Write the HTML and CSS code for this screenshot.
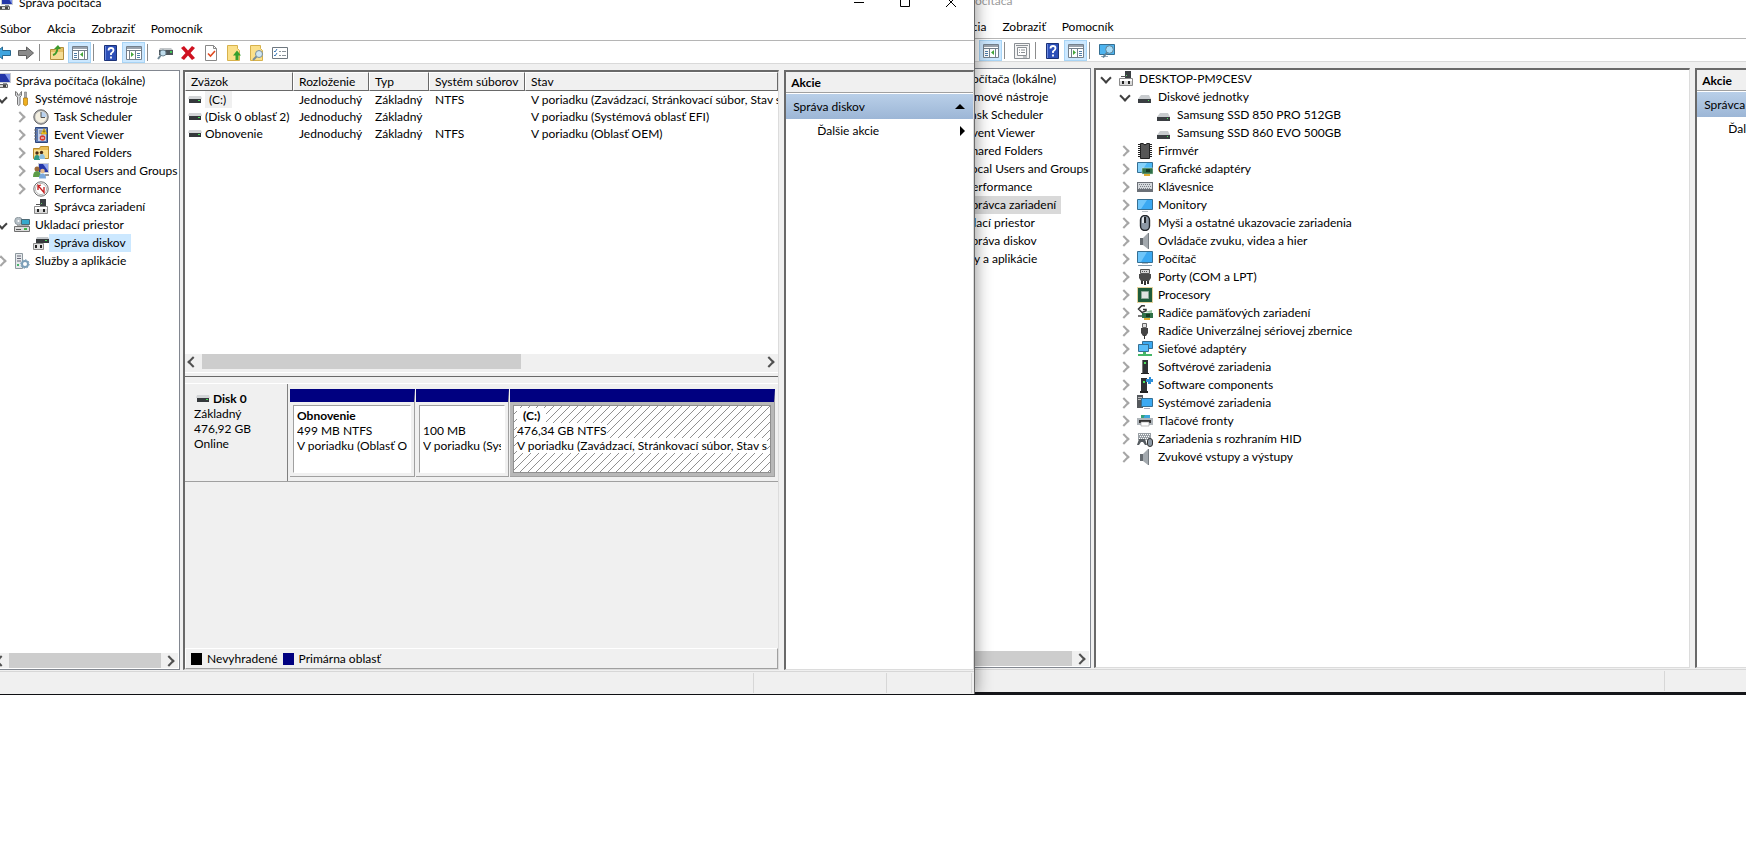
FILE: index.html
```html
<!DOCTYPE html>
<html lang="sk">
<head>
	<meta charset="UTF-8">
	<title>Správa počítača</title>
	<link rel="stylesheet" href="styles.css">
</head>
<body>
	<!-- icons -->
	<svg class="sprite" aria-hidden="true">
		<symbol id="i-computer" viewBox="0 0 16 16">
			<path fill="#c9ccd3" d="M4 0h12v10H4z"/><path fill="#2436a8" d="M5 1h10v8H5z"/><path fill="#7f95e8" d="M10 1h5v8z"/>
			<path fill="#8a8f99" d="M8 10h4v2H8z"/><path fill="#d5d5d5" stroke="#666" d="M.5 11.500h12v3H.5z"/><path fill="#444" d="M2 12h3v2H2zM8 12h3v2H8z"/>
		</symbol>
		<symbol id="i-tools" viewBox="0 0 16 16">
			<path fill="#d8dadd" stroke="#777" d="M1.500.5v4l2 1.500v7.500q1 2 2.500 0V6l1.500-1.500v-4L6 2.500v1.500H3.500V2z"/>
			<path fill="#aaa" stroke="#777" stroke-width=".6" d="M10.500 1h2v6h-2z"/><path fill="#f0b020" stroke="#a87510" stroke-width=".7" d="M9.500 7h4v6.500q-2 2.500-4 0z"/>
		</symbol>
		<symbol id="i-clock" viewBox="0 0 16 16">
			<circle cx="8" cy="8" r="7.200" fill="#b4b4b4" stroke="#666"/><circle cx="8" cy="8" r="5.700" fill="#f3efe0"/>
			<path fill="#b9d2ef" d="M8 8V2.500A5.500 5.500 0 0 1 13.500 8z"/><path fill="none" stroke="#555" d="M8 3v5.500h4"/>
		</symbol>
		<symbol id="i-event" viewBox="0 0 16 16">
			<path fill="#5b79b3" stroke="#2d467c" d="M2.500.5h12v15h-12z"/><path fill="#c3d0e8" d="M5 2h8v12H5z"/><path stroke="#777" d="M1 3h3M1 6h3M1 9h3M1 12h3M6 4h3M6 6h2"/>
			<path fill="#ffd21f" stroke="#b18200" stroke-width=".6" d="M11 1.500l3 5.500H8z"/><path stroke="#222" d="M11 3.500v2"/><circle cx="9.500" cy="11" r="2.800" fill="#d93b30"/><path stroke="#fff" d="M8 11h3"/>
		</symbol>
		<symbol id="i-share" viewBox="0 0 16 16">
			<path fill="#e9bd55" stroke="#b98a2b" d="M.5 3.500h6l1-2h8v12H.5z"/><path fill="#f9de8d" d="M1 5h14v8H1z"/>
			<circle cx="4" cy="8" r="1.700" fill="#4a2c14"/><circle cx="8.500" cy="7.500" r="1.700" fill="#4a2c14"/><path fill="#2f9a86" d="M1 15q0-5 3-5t3 5z"/><path fill="#8dbfe0" d="M6 14q0-5 3-5t3 5z"/>
		</symbol>
		<symbol id="i-users" viewBox="0 0 16 16">
			<path fill="#c9ccd3" d="M5 0h11v10H5z"/><path fill="#2436a8" d="M6 1h9v8H6z"/><path fill="#8fa4ee" d="M10 1h5v7z"/>
			<circle cx="4" cy="6" r="2.500" fill="#9c6a3a"/><path fill="#5c9c48" d="M0 14q0-6 4-6t4 6z"/><circle cx="9.500" cy="8" r="2.300" fill="#e3b98b"/><path fill="#7aa8dc" d="M6 15.500q0-5 3.500-5t3.500 5z"/><path fill="#999" d="M12 11h4v2h-4z"/>
		</symbol>
		<symbol id="i-perf" viewBox="0 0 16 16">
			<circle cx="8" cy="8" r="7.200" fill="#fff" stroke="#6b6b6b"/><circle cx="8" cy="8" r="5.600" fill="none" stroke="#bbb"/>
			<path fill="none" stroke="#c41a1a" stroke-width="1.300" d="M5 9V4.500l6 7V6M5 5l3-1"/>
		</symbol>
		<symbol id="i-device" viewBox="0 0 16 16">
			<path fill="#3b3f42" d="M7 0h6v7H7z"/><path fill="#5fd06a" d="M8 4h1v1H8z"/><path fill="#555" d="M3 5h5v1H3z"/>
			<path fill="#d9d9d9" stroke="#8a8a8a" d="M1.500 7.500h13v7h-13z"/><path fill="#fff" d="M2 8h12v2H2z"/><path fill="#222" d="M4 10h2v3H4zM10 10h2v3h-2z"/>
		</symbol>
		<symbol id="i-storage" viewBox="0 0 16 16">
			<circle cx="4.500" cy="4" r="3.800" fill="#b5bfc6" stroke="#7b858c" stroke-width=".7"/><circle cx="4.500" cy="4" r="1" fill="#fff"/>
			<path fill="#36a9cc" stroke="#4c6975" d="M7.500 2.500h8v5h-8z"/><path fill="#dcdcdc" stroke="#707070" d="M.5 9.500h15v5H.5z"/><path fill="#555" d="M2 12h5v1H2z"/><path fill="#41b649" d="M10 11h3v2h-3z"/><path fill="#aaa" d="M3 8h12v1H3z"/>
		</symbol>
		<symbol id="i-diskmgmt" viewBox="0 0 16 16">
			<path fill="#c3c7ca" d="M4 2h11l1 2H3z"/><path fill="#34383b" d="M3 4h13v4H3z"/><path fill="#4cda5c" d="M12 5h2v1h-2z"/>
			<path fill="#e2e2e2" stroke="#8c8c8c" d="M.5 8.500h10v6H.5z"/><path fill="#222" d="M2 10h2v3H2zM7 10h2v3H7z"/>
		</symbol>
		<symbol id="i-services" viewBox="0 0 16 16">
			<path fill="#e5e9ec" stroke="#8e989f" d="M1.500.5h7v15h-7z"/><path stroke="#667" d="M3 3h4M3 5.500h4M3 8h4"/><path fill="#49b56b" d="M3 11h2v2H3z"/>
			<circle cx="11" cy="11" r="3" fill="none" stroke="#7c9fb8" stroke-width="2"/><circle cx="11" cy="11" r="4.300" fill="none" stroke="#7c9fb8" stroke-dasharray="1.500 1.800"/>
		</symbol>
		<symbol id="i-disk" viewBox="0 0 16 16">
			<path fill="#c9cccf" d="M4 6h8l2 4H1z"/><path fill="#3a3e42" d="M1 10h13v4H1z"/><path fill="#4ce35c" d="M11 11h1v1h-1z"/>
		</symbol>
		<symbol id="i-vol" viewBox="0 0 14 8">
			<path fill="#d3d5d7" d="M1 0h12l1 3H0z"/><path fill="#34383b" d="M1 3h12v4H1z"/><path fill="#4ce35c" d="M10 4h2v1h-2z"/>
		</symbol>
		<symbol id="i-chip" viewBox="0 0 16 16">
			<path stroke="#222" stroke-width="14" stroke-dasharray="1 1" d="M8 1v14"/><path fill="#565656" stroke="#222" d="M3.500.5h2.500l2 1.500 2-1.500h2.500v15h-9z"/>
		</symbol>
		<symbol id="i-display" viewBox="0 0 16 16">
			<path fill="#4db8f5" stroke="#356f93" d="M.5 1.500h15v10H.5z"/><path fill="#86d2fb" d="M1 2h9L4 11H1z"/><path fill="#2f7148" stroke="#d6e4d0" stroke-width=".5" d="M5 7h11v6H5z"/><path fill="#163b26" d="M9 8h4v3H9z"/><path fill="#dcae35" d="M7 13h6v2H7z"/>
		</symbol>
		<symbol id="i-keyboard" viewBox="0 0 16 16">
			<path fill="#6b7077" d="M0 3h16v10H0z"/><path fill="#d5d9dd" d="M1 4h14v6H1z"/><path stroke="#7a7f85" stroke-dasharray="1 1" d="M2 5.500h12M3 7.500h11M2 9.500h12"/>
		</symbol>
		<symbol id="i-monitor" viewBox="0 0 16 16">
			<path fill="#3ba9f2" stroke="#356f93" d="M.5 2.500h15v10H.5z"/><path fill="#6fc6fa" d="M1 3h9l-6 9H1z"/><path fill="#b9bfc4" d="M5 14h6v1H5z"/>
		</symbol>
		<symbol id="i-mouse" viewBox="0 0 16 16">
			<rect x="3.500" y=".5" width="9" height="15" rx="4.500" fill="#8d99a5" stroke="#24282c" stroke-width="1.400"/><path fill="#dfe5ea" d="M5 3q1-1.500 2-1.500V8H5z"/><path fill="#22262a" d="M7 2h2v6H7z"/>
		</symbol>
		<symbol id="i-sound" viewBox="0 0 16 16">
			<path fill="#656b70" d="M3 5h3v7H3z"/><path fill="#a3a9ae" d="M6 5l5-5v16l-5-4z"/><path fill="#777d82" d="M11 0h1v16h-1z"/>
		</symbol>
		<symbol id="i-pc" viewBox="0 0 16 16">
			<path fill="#3ba9f2" stroke="#356f93" d="M.5.5h15v11H.5z"/><path fill="#6fc6fa" d="M1 1h9l-6 10H1z"/><path fill="#b9bfc4" d="M5 12h6v1H5z"/><path fill="#8197a8" d="M1 14h14v1H1z"/>
		</symbol>
		<symbol id="i-port" viewBox="0 0 16 16">
			<path fill="#d4d4d4" stroke="#555" d="M3.500.5h9v4h-9z"/><path stroke="#555" stroke-dasharray="1 1" d="M5 2.500h6"/><path fill="#4a4a4a" d="M2 5h12v4l-2 3H4L2 9z"/><path fill="#333" d="M4 12h2v3H4zM7 12h2v4H7zM10 12h2v3h-2z"/>
		</symbol>
		<symbol id="i-cpu" viewBox="0 0 16 16">
			<path fill="none" stroke="#c8a43a" stroke-dasharray="1 1" d="M.5.5h15v15H.5z"/><path fill="#1f5c3a" d="M1 1h14v14H1z"/><path fill="#e0e3e0" stroke="#8fa898" d="M4.500 4.500h7v7h-7z"/>
		</symbol>
		<symbol id="i-storctl" viewBox="0 0 16 16">
			<path fill="none" stroke="#333" stroke-width="1.500" d="M8 1L5 .5 1.500 4 5 7.500 9 6V4.500H6"/><path fill="#2f7148" d="M5 8h11v5H5z"/><path fill="#9bc6a6" d="M8 7l7-2v3z"/><path fill="#163b26" d="M9 9h4v3H9z"/><path fill="#777" d="M1 10h4v2H1z"/><path fill="#dcae35" d="M7 13h6v2H7z"/>
		</symbol>
		<symbol id="i-usb" viewBox="0 0 16 16">
			<path fill="#e0e0e0" stroke="#666" d="M5.500.5h4v4h-4z"/><path fill="#444" d="M4 5h7v5l-2 3H6l-2-3z"/><path fill="#333" d="M7 12h1v4H7z"/>
		</symbol>
		<symbol id="i-net" viewBox="0 0 16 16">
			<path fill="#3ba9f2" stroke="#356f93" d="M5.500.5h10v7h-10z"/><path fill="#58bcf8" stroke="#356f93" d="M1.500 3.500h10v7h-10z"/><path fill="#46b768" d="M6 11h3v2h6v2H1v-2h5z"/>
		</symbol>
		<symbol id="i-soft" viewBox="0 0 16 16">
			<path fill="#2f3235" d="M5 1h6v13H5z"/><path fill="#4ce35c" d="M7 3h2v2H7z"/><path fill="#777" d="M5 1h1v13H5z"/><path fill="#222" d="M4 14h8v1H4z"/>
		</symbol>
		<symbol id="i-comp" viewBox="0 0 16 16">
			<path fill="#2f3235" d="M4 1h6v13H4z"/><path fill="#4ce35c" d="M6 4h2v2H6z"/><path fill="#222" d="M3 14h8v2H3z"/><path fill="#2f8fd8" d="M12 0h2v2h2v3h-2v2h-3V5H9V2h3z"/>
		</symbol>
		<symbol id="i-system" viewBox="0 0 16 16">
			<path fill="#55595d" d="M0 0h6v13H0z"/><path fill="#bbb" d="M1 2h4v1H1zM1 4h4v1H1z"/><path fill="#3ba9f2" stroke="#356f93" d="M4.500 3.500h11v8h-11z"/><path fill="#aab" d="M7 13h6v1H7z"/>
		</symbol>
		<symbol id="i-printer" viewBox="0 0 16 16">
			<path fill="#3ca6dc" d="M4 2h9v4H4z"/><path fill="#35a17a" d="M4 2h4l-2 4H4z"/><path fill="#aeb4b9" d="M0 5h16v7H0z"/><path fill="#333" d="M2 7h12v3H2z"/><path fill="#fff" stroke="#999" stroke-width=".6" d="M4 9h8v4H4z"/>
		</symbol>
		<symbol id="i-hid" viewBox="0 0 16 16">
			<path fill="#9aa0a5" d="M1 2h13v7H1z"/><path stroke="#fff" stroke-dasharray="1 1" d="M2 3.500h11M3 5.500h10M2 7.500h11"/><path fill="#555b60" d="M0 14l2-6h6l2 6H8L6 11H4l-2 3z"/><rect x="10.500" y="7.500" width="5" height="8" rx="2.500" fill="#8d99a5" stroke="#333"/>
		</symbol>
		<!-- toolbar -->
		<symbol id="t-back" viewBox="0 0 16 16"><path fill="#3fa5df" stroke="#28688f" d="M.5 8l7-6v3.500h8v5h-8V14z"/></symbol>
		<symbol id="t-fwd" viewBox="0 0 16 16"><path fill="#8b8b8b" stroke="#5e5e5e" d="M15.500 8l-7-6v3.500h-8v5h8V14z"/></symbol>
		<symbol id="t-up" viewBox="0 0 16 16"><path fill="#e6c066" stroke="#b28e3a" d="M1.500 4.500h5l1-2h7v12h-13z"/><path fill="#f5dc95" d="M2 7h12v7H2z"/><path fill="none" stroke="#3d9a2c" stroke-width="2" d="M4 10q4-1 4.500-7"/><path fill="#3d9a2c" d="M5 4l4-4 3 4z"/></symbol>
		<symbol id="t-tree" viewBox="0 0 16 16"><path fill="#fff" stroke="#74808c" d="M.5 1.500h15v13H.5z"/><path fill="#9aa3ad" d="M1 2h14v2H1z"/><path stroke="#74808c" d="M1 5.500h14M6.500 6v8M12.500 6v8"/><path stroke="#4f7da8" d="M2 8.500h3M2 10.500h3M2 12.500h3"/><path fill="#44a63a" d="M11 7v5L8 9.500z"/></symbol>
		<symbol id="t-action" viewBox="0 0 16 16"><path fill="#fff" stroke="#74808c" d="M.5 1.500h15v13H.5z"/><path fill="#9aa3ad" d="M1 2h14v2H1z"/><path stroke="#74808c" d="M1 5.500h14M3.500 6v8M9.500 6v8"/><path stroke="#4f7da8" d="M11 8.500h3M11 10.500h3M11 12.500h3"/><path fill="#44a63a" d="M5 7v5l3-2.500z"/></symbol>
		<symbol id="t-help" viewBox="0 0 16 16"><path fill="#2c4fb8" stroke="#1b3278" d="M1.500.5h12v15h-12z"/><path fill="#6d8be0" d="M2 1h1v14H2z"/><path fill="none" stroke="#fff" stroke-width="1.800" d="M5.500 5.500q0-2.500 2.500-2.500t2.500 2.200Q10.500 7 8 8.500V10M8 11.500v2"/></symbol>
		<symbol id="t-rescan" viewBox="0 0 16 16"><path fill="#c3c7ca" d="M3 3h11l2 2H2z"/><path fill="#4d555b" d="M2 5h14v5H2z"/><path fill="#45c957" d="M13 6h2v2h-2z"/><circle cx="6" cy="8" r="3" fill="#bfdcec" stroke="#718896"/><path stroke="#718896" stroke-width="2" d="M4 10l-3 4"/></symbol>
		<symbol id="t-delete" viewBox="0 0 16 16"><path fill="#cf1120" d="M1 3l3-2 4 4.500L12 1l3 2-4.500 5 4.500 5-3 2-4-4.500L4 15l-3-2 4.500-5z"/></symbol>
		<symbol id="t-check" viewBox="0 0 16 16"><path fill="#fff" stroke="#888" d="M2.500.5h8l3 3v12h-11z"/><path fill="none" stroke="#888" d="M10.500.5v3h3"/><path fill="none" stroke="#e04a20" stroke-width="1.600" d="M5 8.500L7.500 11 12 6"/></symbol>
		<symbol id="t-export" viewBox="0 0 16 16"><path fill="#fbe08a" stroke="#d7b24c" d="M1.500.5h10v3l2 2v10h-12z"/><path fill="#36a02c" d="M11 5.500l4 5h-2.500V15h-3v-4.500H7z"/></symbol>
		<symbol id="t-find" viewBox="0 0 16 16"><path fill="#fbe08a" stroke="#d7b24c" d="M1.500.5h10v3l2 2v10h-12z"/><circle cx="10" cy="9" r="3.500" fill="#cfe6f2" stroke="#7a8e9a"/><path stroke="#7a8e9a" stroke-width="2" d="M7.500 11.500L4 15"/></symbol>
		<symbol id="t-list" viewBox="0 0 16 16"><path fill="#fff" stroke="#6f7880" d="M.5 2.500h15v11H.5z"/><path fill="none" stroke="#3a78b8" d="M2 6l1 1 2-3M2 10l1 1 2-3"/><path stroke="#8b949b" d="M7 6.500h2M10 6.500h4M7 10.500h2M10 10.500h4"/></symbol>
		<symbol id="t-props" viewBox="0 0 16 16"><path fill="#f4f4f4" stroke="#8a8f94" d="M.5.5h15v15H.5z"/><path fill="#fff" stroke="#8a8f94" d="M3.500 4.500h9v8h-9z"/><path stroke="#8a8f94" d="M2 2.500h12M5 7h1M7 7h4M5 9.500h1M7 9.500h4M9 14h4"/></symbol>
		<symbol id="t-scan" viewBox="0 0 16 16"><path fill="#4db4f0" stroke="#356f93" d="M.5 1.500h15v10H.5z"/><path fill="#9ab" d="M2 13h7v1H2z"/><circle cx="10.500" cy="6.500" r="3.800" fill="#a7dcf8" stroke="#5f8296"/><path stroke="#5f8296" stroke-width="2" d="M8 9.500l-4 5"/></symbol>
	</svg>

	<div class="desktop">
		<!-- device manager, behind -->
		<section class="window window-back">
			<header class="titlebar">
				<svg class="icon"><use href="#i-computer"/></svg>
				<h1 class="title">Správa počítača</h1>
			</header>
			<nav class="menubar">
				<button>Súbor</button><button>Akcia</button><button>Zobraziť</button><button>Pomocník</button>
			</nav>
			<div class="toolbar">
				<button aria-label="Späť"><svg class="icon"><use href="#t-back"/></svg></button>
				<button aria-label="Dopredu"><svg class="icon"><use href="#t-fwd"/></svg></button>
				<span class="sep"></span>
				<button aria-label="Nahor"><svg class="icon"><use href="#t-up"/></svg></button>
				<button class="on" aria-label="Strom konzoly"><svg class="icon"><use href="#t-tree"/></svg></button>
				<span class="sep"></span>
				<button aria-label="Vlastnosti"><svg class="icon"><use href="#t-props"/></svg></button>
				<span class="sep"></span>
				<button aria-label="Pomocník"><svg class="icon"><use href="#t-help"/></svg></button>
				<button class="on" aria-label="Tabla akcií"><svg class="icon"><use href="#t-action"/></svg></button>
				<span class="sep"></span>
				<button aria-label="Vyhľadať zmeny hardvéru"><svg class="icon"><use href="#t-scan"/></svg></button>
			</div>
			<div class="content">
				<div class="pane-tree">
					<ul class="tree">
						<li>
							<div class="node"><svg class="icon"><use href="#i-computer"/></svg><span>Správa počítača (lokálne)</span></div>
						</li>
						<li>
							<div class="node"><button class="toggle open" aria-label="Zbaliť"></button><svg class="icon"><use href="#i-tools"/></svg><span>Systémové nástroje</span></div>
							<ul>
								<li class="node"><button class="toggle" aria-label="Rozbaliť"></button><svg class="icon"><use href="#i-clock"/></svg><span>Task Scheduler</span></li>
								<li class="node"><button class="toggle" aria-label="Rozbaliť"></button><svg class="icon"><use href="#i-event"/></svg><span>Event Viewer</span></li>
								<li class="node"><button class="toggle" aria-label="Rozbaliť"></button><svg class="icon"><use href="#i-share"/></svg><span>Shared Folders</span></li>
								<li class="node"><button class="toggle" aria-label="Rozbaliť"></button><svg class="icon"><use href="#i-users"/></svg><span>Local Users and Groups</span></li>
								<li class="node"><button class="toggle" aria-label="Rozbaliť"></button><svg class="icon"><use href="#i-perf"/></svg><span>Performance</span></li>
								<li class="node leaf selected"><svg class="icon"><use href="#i-device"/></svg><span>Správca zariadení</span></li>
							</ul>
						</li>
						<li>
							<div class="node"><button class="toggle open" aria-label="Zbaliť"></button><svg class="icon"><use href="#i-storage"/></svg><span>Ukladací priestor</span></div>
							<ul>
								<li class="node leaf"><svg class="icon"><use href="#i-diskmgmt"/></svg><span>Správa diskov</span></li>
							</ul>
						</li>
						<li class="node"><button class="toggle" aria-label="Rozbaliť"></button><svg class="icon"><use href="#i-services"/></svg><span>Služby a aplikácie</span></li>
					</ul>
					<div class="scrollbar"><button class="arrow left" aria-label="Doľava"></button><div class="track"><div class="thumb"></div></div><button class="arrow" aria-label="Doprava"></button></div>
				</div>
				<div class="pane-main devices">
					<ul class="tree">
						<li>
							<div class="node"><button class="toggle open" aria-label="Zbaliť"></button><svg class="icon"><use href="#i-device"/></svg><span>DESKTOP-PM9CESV</span></div>
							<ul>
								<li>
									<div class="node"><button class="toggle open" aria-label="Zbaliť"></button><svg class="icon"><use href="#i-disk"/></svg><span>Diskové jednotky</span></div>
									<ul>
										<li class="node leaf"><svg class="icon"><use href="#i-disk"/></svg><span>Samsung SSD 850 PRO 512GB</span></li>
										<li class="node leaf"><svg class="icon"><use href="#i-disk"/></svg><span>Samsung SSD 860 EVO 500GB</span></li>
									</ul>
								</li>
								<li class="node"><button class="toggle" aria-label="Rozbaliť"></button><svg class="icon"><use href="#i-chip"/></svg><span>Firmvér</span></li>
								<li class="node"><button class="toggle" aria-label="Rozbaliť"></button><svg class="icon"><use href="#i-display"/></svg><span>Grafické adaptéry</span></li>
								<li class="node"><button class="toggle" aria-label="Rozbaliť"></button><svg class="icon"><use href="#i-keyboard"/></svg><span>Klávesnice</span></li>
								<li class="node"><button class="toggle" aria-label="Rozbaliť"></button><svg class="icon"><use href="#i-monitor"/></svg><span>Monitory</span></li>
								<li class="node"><button class="toggle" aria-label="Rozbaliť"></button><svg class="icon"><use href="#i-mouse"/></svg><span>Myši a ostatné ukazovacie zariadenia</span></li>
								<li class="node"><button class="toggle" aria-label="Rozbaliť"></button><svg class="icon"><use href="#i-sound"/></svg><span>Ovládače zvuku, videa a hier</span></li>
								<li class="node"><button class="toggle" aria-label="Rozbaliť"></button><svg class="icon"><use href="#i-pc"/></svg><span>Počítač</span></li>
								<li class="node"><button class="toggle" aria-label="Rozbaliť"></button><svg class="icon"><use href="#i-port"/></svg><span>Porty (COM a LPT)</span></li>
								<li class="node"><button class="toggle" aria-label="Rozbaliť"></button><svg class="icon"><use href="#i-cpu"/></svg><span>Procesory</span></li>
								<li class="node"><button class="toggle" aria-label="Rozbaliť"></button><svg class="icon"><use href="#i-storctl"/></svg><span>Radiče pamäťových zariadení</span></li>
								<li class="node"><button class="toggle" aria-label="Rozbaliť"></button><svg class="icon"><use href="#i-usb"/></svg><span>Radiče Univerzálnej sériovej zbernice</span></li>
								<li class="node"><button class="toggle" aria-label="Rozbaliť"></button><svg class="icon"><use href="#i-net"/></svg><span>Sieťové adaptéry</span></li>
								<li class="node"><button class="toggle" aria-label="Rozbaliť"></button><svg class="icon"><use href="#i-soft"/></svg><span>Softvérové zariadenia</span></li>
								<li class="node"><button class="toggle" aria-label="Rozbaliť"></button><svg class="icon"><use href="#i-comp"/></svg><span>Software components</span></li>
								<li class="node"><button class="toggle" aria-label="Rozbaliť"></button><svg class="icon"><use href="#i-system"/></svg><span>Systémové zariadenia</span></li>
								<li class="node"><button class="toggle" aria-label="Rozbaliť"></button><svg class="icon"><use href="#i-printer"/></svg><span>Tlačové fronty</span></li>
								<li class="node"><button class="toggle" aria-label="Rozbaliť"></button><svg class="icon"><use href="#i-hid"/></svg><span>Zariadenia s rozhraním HID</span></li>
								<li class="node"><button class="toggle" aria-label="Rozbaliť"></button><svg class="icon"><use href="#i-sound"/></svg><span>Zvukové vstupy a výstupy</span></li>
							</ul>
						</li>
					</ul>
				</div>
				<aside class="pane-actions">
					<h2>Akcie</h2>
					<button class="action-title">Správca zariadení<i class="tri-up"></i></button>
					<button class="action-item">Ďalšie akcie<i class="tri-right"></i></button>
				</aside>
			</div>
			<footer class="statusbar"><span></span><span></span><span></span></footer>
		</section>

		<!-- disk management, in front -->
		<section class="window window-front">
			<header class="titlebar">
				<svg class="icon"><use href="#i-computer"/></svg>
				<h1 class="title">Správa počítača</h1>
				<div class="controls">
					<button aria-label="Minimalizovať"><svg viewBox="0 0 10 10"><path d="M0 5.500h10"/></svg></button>
					<button aria-label="Maximalizovať"><svg viewBox="0 0 10 10"><path d="M.5.5h9v9h-9z"/></svg></button>
					<button aria-label="Zavrieť"><svg viewBox="0 0 10 10"><path d="M0 0l10 10M10 0L0 10"/></svg></button>
				</div>
			</header>
			<nav class="menubar">
				<button>Súbor</button><button>Akcia</button><button>Zobraziť</button><button>Pomocník</button>
			</nav>
			<div class="toolbar">
				<button aria-label="Späť"><svg class="icon"><use href="#t-back"/></svg></button>
				<button aria-label="Dopredu"><svg class="icon"><use href="#t-fwd"/></svg></button>
				<span class="sep"></span>
				<button aria-label="Nahor"><svg class="icon"><use href="#t-up"/></svg></button>
				<button class="on" aria-label="Strom konzoly"><svg class="icon"><use href="#t-tree"/></svg></button>
				<span class="sep"></span>
				<button aria-label="Pomocník"><svg class="icon"><use href="#t-help"/></svg></button>
				<button class="on" aria-label="Tabla akcií"><svg class="icon"><use href="#t-action"/></svg></button>
				<span class="sep"></span>
				<button aria-label="Znova prehľadať disky"><svg class="icon"><use href="#t-rescan"/></svg></button>
				<button aria-label="Odstrániť"><svg class="icon"><use href="#t-delete"/></svg></button>
				<button aria-label="Vlastnosti"><svg class="icon"><use href="#t-check"/></svg></button>
				<button aria-label="Exportovať"><svg class="icon"><use href="#t-export"/></svg></button>
				<button aria-label="Hľadať"><svg class="icon"><use href="#t-find"/></svg></button>
				<button aria-label="Nastavenie"><svg class="icon"><use href="#t-list"/></svg></button>
			</div>
			<div class="content">
				<div class="pane-tree">
					<ul class="tree">
						<li>
							<div class="node"><svg class="icon"><use href="#i-computer"/></svg><span>Správa počítača (lokálne)</span></div>
						</li>
						<li>
							<div class="node"><button class="toggle open" aria-label="Zbaliť"></button><svg class="icon"><use href="#i-tools"/></svg><span>Systémové nástroje</span></div>
							<ul>
								<li class="node"><button class="toggle" aria-label="Rozbaliť"></button><svg class="icon"><use href="#i-clock"/></svg><span>Task Scheduler</span></li>
								<li class="node"><button class="toggle" aria-label="Rozbaliť"></button><svg class="icon"><use href="#i-event"/></svg><span>Event Viewer</span></li>
								<li class="node"><button class="toggle" aria-label="Rozbaliť"></button><svg class="icon"><use href="#i-share"/></svg><span>Shared Folders</span></li>
								<li class="node"><button class="toggle" aria-label="Rozbaliť"></button><svg class="icon"><use href="#i-users"/></svg><span>Local Users and Groups</span></li>
								<li class="node"><button class="toggle" aria-label="Rozbaliť"></button><svg class="icon"><use href="#i-perf"/></svg><span>Performance</span></li>
								<li class="node leaf"><svg class="icon"><use href="#i-device"/></svg><span>Správca zariadení</span></li>
							</ul>
						</li>
						<li>
							<div class="node"><button class="toggle open" aria-label="Zbaliť"></button><svg class="icon"><use href="#i-storage"/></svg><span>Ukladací priestor</span></div>
							<ul>
								<li class="node leaf selected"><svg class="icon"><use href="#i-diskmgmt"/></svg><span>Správa diskov</span></li>
							</ul>
						</li>
						<li class="node"><button class="toggle" aria-label="Rozbaliť"></button><svg class="icon"><use href="#i-services"/></svg><span>Služby a aplikácie</span></li>
					</ul>
					<div class="scrollbar"><button class="arrow left" aria-label="Doľava"></button><div class="track"><div class="thumb"></div></div><button class="arrow" aria-label="Doprava"></button></div>
				</div>
				<div class="pane-main disks">
					<div class="volumes">
						<table>
							<thead>
								<tr><th class="c-vol">Zväzok</th><th class="c-layout">Rozloženie</th><th class="c-type">Typ</th><th class="c-fs">Systém súborov</th><th>Stav</th></tr>
							</thead>
							<tbody>
								<tr><td><svg class="vol"><use href="#i-vol"/></svg><span class="current">(C:)</span></td><td>Jednoduchý</td><td>Základný</td><td>NTFS</td><td>V poriadku (Zavádzací, Stránkovací súbor, Stav systému)</td></tr>
								<tr><td><svg class="vol"><use href="#i-vol"/></svg>(Disk 0 oblasť 2)</td><td>Jednoduchý</td><td>Základný</td><td></td><td>V poriadku (Systémová oblasť EFI)</td></tr>
								<tr><td><svg class="vol"><use href="#i-vol"/></svg>Obnovenie</td><td>Jednoduchý</td><td>Základný</td><td>NTFS</td><td>V poriadku (Oblasť OEM)</td></tr>
							</tbody>
						</table>
						<div class="scrollbar"><button class="arrow left" aria-label="Doľava"></button><div class="track"><div class="thumb"></div></div><button class="arrow" aria-label="Doprava"></button></div>
					</div>
					<div class="splitter"></div>
					<div class="disk-row">
						<div class="disk-info">
							<strong><svg class="vol"><use href="#i-vol"/></svg>Disk 0</strong>
							<p>Základný</p>
							<p>476,92 GB</p>
							<p>Online</p>
						</div>
						<div class="parts">
							<div class="part part-recovery">
								<div class="part-body"><strong>Obnovenie</strong><p>499 MB NTFS</p><p>V poriadku (Oblasť OEM)</p></div>
							</div>
							<div class="part part-efi">
								<div class="part-body"><strong>&nbsp;</strong><p>100 MB</p><p>V poriadku (Systémová oblasť EFI)</p></div>
							</div>
							<div class="part part-c">
								<div class="part-body"><strong>(C:)</strong><p>476,34 GB NTFS</p><p>V poriadku (Zavádzací, Stránkovací súbor, Stav systému)</p></div>
							</div>
						</div>
					</div>
					<div class="legend">
						<span class="swatch unallocated"></span><span>Nevyhradené</span>
						<span class="swatch primary"></span><span>Primárna oblasť</span>
					</div>
				</div>
				<aside class="pane-actions">
					<h2>Akcie</h2>
					<button class="action-title">Správa diskov<i class="tri-up"></i></button>
					<button class="action-item">Ďalšie akcie<i class="tri-right"></i></button>
				</aside>
			</div>
			<footer class="statusbar"><span></span><span></span><span></span></footer>
		</section>
	</div>
</body>
</html>
```
FILE: styles.css
```css
* {
	box-sizing: border-box;
	margin: 0;
	padding: 0;
}
body {
	background: #fff;
	color: #000;
	font: 12px/18px Lato, "Open Sans", sans-serif;
}
button {
	border: 0;
	background: none;
	font: inherit;
	color: inherit;
}
ul {
	list-style: none;
}
.sprite {
	position: absolute;
	width: 0;
	height: 0;
}
.icon {
	flex: none;
	width: 16px;
	height: 16px;
}
.desktop {
	position: relative;
	height: 695px;
	overflow: hidden;
	background: #15161a;
}

/* windows */
.window {
	position: absolute;
	width: 57%;
	height: 706px;
	display: flex;
	flex-direction: column;
	background: #f0f0f0;
	border-right: 1px solid #6b6b6b;
}
.window-front {
	left: -20px;
	top: -12px;
	box-shadow: 0 2px 16px rgba(0, 0, 0, 0.45);
}
.window-back {
	left: 891px;
	top: -14px;
}
.titlebar {
	display: flex;
	align-items: center;
	gap: 6px;
	height: 30px;
	padding-left: 17px;
	background: #fff;
}
.title {
	flex: 1;
	font-size: 12px;
	font-weight: normal;
}
.window-back .title {
	color: #999;
}
.controls {
	display: flex;
}
.controls button {
	width: 46px;
	height: 30px;
}
.controls svg {
	width: 10px;
	height: 10px;
	fill: none;
	stroke: #000;
}
.menubar {
	display: flex;
	height: 23px;
	padding-left: 12px;
	background: #fff;
	border-bottom: 1px solid #b5b5b5;
}
.menubar button {
	padding: 0 8px;
}
.toolbar {
	display: flex;
	height: 23px;
	padding: 1px 0 0 11px;
	background: #fff;
	border-bottom: 1px solid #d9d9d9;
}
.toolbar button {
	display: flex;
	align-items: center;
	justify-content: center;
	width: 23px;
}
.toolbar .on {
	background: #cce8ff;
	border: 1px solid #a8d4f5;
}
.sep {
	width: 1px;
	margin: 2px 5px 2px 2px;
	background: #8c8c8c;
}
.content {
	flex: 1;
	display: flex;
	min-height: 0;
	padding: 6px 0 1px;
}

/* tree */
.pane-tree {
	flex: none;
	display: flex;
	flex-direction: column;
	width: 200px;
	margin-right: 3px;
	padding: 1px 1px 1px 15px;
	background: #fff;
	border: 1px solid #828790;
	border-left: 0;
}
.pane-tree .tree {
	flex: 1;
}
.tree ul {
	padding-left: 19px;
}
.node {
	display: flex;
	align-items: center;
	height: 18px;
	white-space: nowrap;
}
.node span {
	padding: 0 5px;
}
.leaf {
	padding-left: 19px;
}
.selected span {
	background: #cce8ff;
}
.window-back .selected span {
	background: #d9d9d9;
}
.toggle {
	flex: none;
	display: flex;
	align-items: center;
	justify-content: center;
	width: 16px;
	height: 18px;
	margin-right: 3px;
	padding-right: 4px;
}
.toggle.open {
	padding-right: 2px;
	padding-bottom: 2px;
}
.toggle::before {
	content: "";
	width: 6px;
	height: 6px;
	border: solid #a6a6a6;
	border-width: 2px 2px 0 0;
	transform: rotate(45deg);
}
.toggle.open::before {
	border-color: #404040;
	transform: rotate(135deg);
}

/* scrollbars */
.scrollbar {
	display: flex;
	height: 15px;
	background: #f0f0f0;
}
.arrow {
	display: flex;
	align-items: center;
	justify-content: center;
	width: 17px;
	padding-right: 2px;
}
.arrow::before {
	content: "";
	width: 6px;
	height: 6px;
	border: solid #505050;
	border-width: 2px 2px 0 0;
	transform: rotate(45deg);
}
.arrow.left::before {
	transform: rotate(225deg);
}
.track {
	flex: 1;
}
.thumb {
	width: 57%;
	height: 100%;
	background: #cdcdcd;
}
.pane-tree .thumb {
	width: 100%;
}
.pane-tree .left {
	width: 14px;
}

/* middle pane */
.pane-main {
	flex: 1;
	min-width: 0;
	border: solid #696969;
	border-width: 2px 1px 1px 2px;
	border-right-color: #dcdcdc;
	border-bottom-color: #dcdcdc;
}
.devices {
	padding-left: 3px;
	background: #fff;
}
.disks {
	display: flex;
	flex-direction: column;
}
.volumes {
	display: flex;
	flex-direction: column;
	justify-content: space-between;
	height: 297px;
	background: #fff;
}
.volumes table {
	width: 100%;
	table-layout: fixed;
	border-collapse: separate;
	border-spacing: 0;
}
.volumes th {
	height: 19px;
	padding-left: 5px;
	background: #f0f0f0;
	border: 1px solid #696969;
	border-top-color: #fff;
	border-left-color: #fff;
	font-weight: normal;
	line-height: 17px;
	text-align: left;
	white-space: nowrap;
}
.volumes td {
	height: 17px;
	padding-left: 6px;
	line-height: 17px;
	overflow: hidden;
	white-space: nowrap;
}
.volumes td:first-child {
	padding-left: 3px;
}
.c-vol {
	width: 108px;
}
.c-layout {
	width: 76px;
}
.c-type {
	width: 60px;
}
.c-fs {
	width: 96px;
}
.vol {
	width: 14px;
	height: 8px;
	margin-right: 3px;
}
.current {
	display: inline-block;
	padding: 0 6px 0 4px;
	background: #f0f0f0;
}
.splitter {
	height: 15px;
	border-bottom: 1px solid #fff;
	background: linear-gradient(#f0f0f0 3px, #fff 3px, #fff 4px, #f0f0f0 4px, #f0f0f0 7px, #696969 7px, #696969 8px, #f0f0f0 8px);
}
.disk-row {
	display: flex;
	height: 98px;
	border-bottom: 1px solid #a0a0a0;
	line-height: 15px;
}
.disk-info {
	flex: none;
	width: 103px;
	padding: 7px 0 0 9px;
	border-right: 1px solid #808080;
}
.disk-info .vol {
	margin-left: 2px;
}
.parts {
	flex: 1;
	display: flex;
	gap: 1px;
	min-width: 0;
	padding: 5px 3px 4px 2px;
}
.part {
	min-width: 0;
	padding: 3px;
	border-top: 13px solid #000080;
	border-right: 1px solid #a0a0a0;
	border-bottom: 1px solid #a0a0a0;
}
.part-recovery {
	flex: 0 0 125px;
}
.part-efi {
	flex: 0 0 93px;
}
.part-c {
	flex: 1;
	background: #b8b8b8;
}
.part-body {
	height: 100%;
	padding: 2px 3px;
	overflow: hidden;
	background: #fff;
	border: 1px solid #a0a0a0;
	border-right-color: #fff;
	border-bottom-color: #fff;
	white-space: nowrap;
}
.part-body strong {
	display: block;
}
.part-body p {
	overflow: hidden;
}
.part-c .part-body {
	border-color: #909090;
	background: linear-gradient(to bottom right, #fff 45%, #909090 50%, #fff 55%) 0 0 / 8px 8px;
}
.part-c strong,
.part-c p {
	width: fit-content;
	max-width: 100%;
	background: #fff;
}
.part-c strong {
	padding: 0 6px;
}
.legend {
	display: flex;
	align-items: center;
	gap: 5px;
	height: 21px;
	margin-top: auto;
	padding-left: 5px;
	border: 1px solid #fff;
	border-right-color: #a0a0a0;
	border-bottom-color: #a0a0a0;
}
.swatch {
	width: 11px;
	height: 12px;
}
.unallocated {
	background: #000;
}
.primary {
	background: #000080;
}

/* actions */
.pane-actions {
	flex: none;
	width: 190px;
	margin-left: 5px;
	background: #fff;
	border: solid #696969;
	border-width: 2px 1px 1px 2px;
	border-right-color: #dcdcdc;
	border-bottom-color: #dcdcdc;
}
.pane-actions h2 {
	height: 21px;
	padding-left: 5px;
	background: #f0f0f0;
	border-bottom: 1px solid #a0a0a0;
	font-size: 12px;
	line-height: 21px;
}
.action-title,
.action-item {
	display: flex;
	align-items: center;
	justify-content: space-between;
	width: 100%;
	height: 25px;
	margin-top: 1px;
	padding: 0 8px 0 7px;
}
.action-title {
	background: linear-gradient(#b9cfe8, #9cb6d6);
}
.action-item {
	height: 24px;
	margin-top: 0;
	padding-left: 31px;
}
.tri-up {
	border: 5px solid transparent;
	border-top: 0;
	border-bottom-color: #000;
}
.tri-right {
	border: 5px solid transparent;
	border-right: 0;
	border-left-color: #000;
}

/* status bar */
.statusbar {
	display: flex;
	height: 23px;
	padding: 1px 2px 1px 0;
	border-top: 1px solid #d7d7d7;
}
.statusbar span {
	width: 85px;
	border-right: 1px solid #d7d7d7;
}
.statusbar span:first-child {
	flex: 1;
}
.statusbar span:nth-child(2) {
	width: 133px;
}
```
